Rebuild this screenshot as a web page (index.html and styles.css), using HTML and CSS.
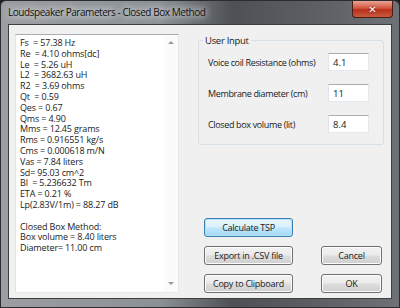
FILE: index.html
```html
<!DOCTYPE html>
<html lang="en">
<head>
    <meta charset="UTF-8">
    <title>Loudspeaker Parameters - Closed Box Method</title>
    <link rel="stylesheet" href="styles.css">
</head>
<body>

<div class="window">
    <div class="titlebar">
        <span class="title">Loudspeaker Parameters - Closed Box Method</span>
        <span class="close">&#x2715;</span>
    </div>

    <div class="client">
        <div class="results">
            <pre class="results-text">Fs  = 57.38 Hz
Re  = 4.10 ohms[dc]
Le  = 5.26 uH
L2  = 3682.63 uH
R2  = 3.69 ohms
Qt  = 0.59
Qes = 0.67
Qms = 4.90
Mms = 12.45 grams
Rms = 0.916551 kg/s
Cms = 0.000618 m/N
Vas = 7.84 liters
Sd= 95.03 cm^2
Bl  = 5.236632 Tm
ETA = 0.21 %
Lp(2.83V/1m) = 88.27 dB

Closed Box Method:
Box volume = 8.40 liters
Diameter= 11.00 cm</pre>
            <div class="scrollbar">
                <span class="arrow up"></span>
                <span class="arrow down"></span>
            </div>
        </div>

        <div class="side">
            <fieldset class="group">
                <legend>User Input</legend>
                <div class="field">
                    <label>Voice coil Resistance (ohms)</label>
                    <span class="input">4.1</span>
                </div>
                <div class="field">
                    <label>Membrane diameter (cm)</label>
                    <span class="input">11</span>
                </div>
                <div class="field">
                    <label>Closed box volume (lit)</label>
                    <span class="input">8.4</span>
                </div>
            </fieldset>

            <div class="actions">
                <button class="btn wide default">Calculate TSP</button>
                <span></span>
                <button class="btn wide">Export in .CSV file</button>
                <button class="btn small">Cancel</button>
                <button class="btn wide">Copy to Clipboard</button>
                <button class="btn small">OK</button>
            </div>
        </div>
    </div>
</div>

</body>
</html>
```

FILE: styles.css
```css
body {
    margin: 0;
    width: 400px;
    height: 308px;
    overflow: hidden;
    background: #1c1e20;
    font-family: 'Open Sans', 'DejaVu Sans', sans-serif;
}
.window {
    box-sizing: border-box;
    width: 400px;
    height: 308px;
    padding: 0 7px 8px 7px;
    border: 1px solid #2a2c2e;
    border-radius: 6px 6px 0 0;
    background: linear-gradient(to right, #9a9ea2 0%, #8c9195 40%, #4d5155 58%, #5c6064 80%, #6e7276 100%);
    display: flex;
    flex-direction: column;
}
.titlebar {
    height: 23px;
    display: flex;
    align-items: center;
    justify-content: space-between;
}
.title {
    font-size: 10px;
    letter-spacing: -0.45px;
    color: #111;
    text-shadow: 0 0 6px #e6e8ea, 0 0 8px #e6e8ea;
    margin-top: -1px;
}
.close {
    width: 39px;
    height: 16px;
    margin-top: -6px;
    margin-right: -1px;
    border: 1px solid #4a1c14;
    border-top: none;
    border-radius: 0 0 4px 4px;
    background: linear-gradient(#e8a496 0%, #d2553e 45%, #b8301c 55%, #c85a3e 100%);
    color: #fff;
    font-size: 10px;
    font-weight: bold;
    text-align: center;
    line-height: 16px;
    text-shadow: 0 0 2px #5a1a10;
}
.client {
    flex: 1;
    background: #f0f0f0;
    border: 1px solid #3c3f42;
    display: flex;
    padding: 9px 7px 5px 6px;
}
.results {
    width: 162px;
    background: #fff;
    border: 1px solid #abadb3;
    border-color: #abadb3 #e3e9ef #e3e9ef #e2e3ea;
    display: flex;
}
.results-text {
    flex: 1;
    margin: 0;
    padding: 3px 0 0 4px;
    font-family: 'Open Sans', 'DejaVu Sans', sans-serif;
    font-size: 9px;
    letter-spacing: -0.15px;
    line-height: 10.8px;
    color: #1a1a1a;
    white-space: pre;
}
.scrollbar {
    width: 14px;
    background: #fbfbfb;
    display: flex;
    flex-direction: column;
    justify-content: space-between;
    align-items: center;
    padding: 6px 0 7px 0;
}
.arrow {
    width: 0;
    height: 0;
    border-left: 3px solid transparent;
    border-right: 3px solid transparent;
}
.arrow.up {
    border-bottom: 3px solid #9a9a9a;
}
.arrow.down {
    border-top: 3px solid #9a9a9a;
}
.side {
    flex: 1;
    padding-left: 19px;
    display: flex;
    flex-direction: column;
}
.group {
    margin: 0;
    height: 103px;
    padding: 6px 14px 0 9px;
    border: 1px solid #d5dfe5;
    border-radius: 3px;
    display: flex;
    flex-direction: column;
    gap: 13px;
}
.group legend {
    font-size: 9.5px;
    letter-spacing: -0.3px;
    color: #1a1a1a;
    padding: 0 2px;
    margin-left: -5px;
}
.field {
    display: flex;
    align-items: center;
    justify-content: space-between;
    font-size: 9px;
    letter-spacing: -0.35px;
    color: #1a1a1a;
    white-space: nowrap;
}
.input {
    box-sizing: border-box;
    width: 41px;
    height: 18px;
    background: #fff;
    border: 1px solid #abadb3;
    border-color: #abadb3 #e3e9ef #e3e9ef #e2e3ea;
    padding: 2px 0 0 4px;
    font-size: 9.5px;
    letter-spacing: 0;
}
.actions {
    margin-top: auto;
    display: grid;
    grid-template-columns: 89px 61px;
    justify-content: space-between;
    row-gap: 9px;
    padding: 0 0 0 6px;
    margin-right: 2px;
}
.btn {
    height: 19px;
    padding: 0;
    font-family: 'Open Sans', 'DejaVu Sans', sans-serif;
    font-size: 9px;
    letter-spacing: -0.25px;
    color: #1a1a1a;
    border: 1px solid #707070;
    border-radius: 3px;
    background: linear-gradient(#f2f2f2 0%, #ebebeb 48%, #dddddd 52%, #cfcfcf 100%);
    box-shadow: inset 0 0 0 1px #fcfcfc;
}
.btn.default {
    border-color: #3c7fb1;
    background: linear-gradient(#eaf6fd 0%, #d9f0fc 48%, #bee6fd 52%, #a7d9f5 100%);
    box-shadow: inset 0 0 0 1px #b2e4f8;
}
```
